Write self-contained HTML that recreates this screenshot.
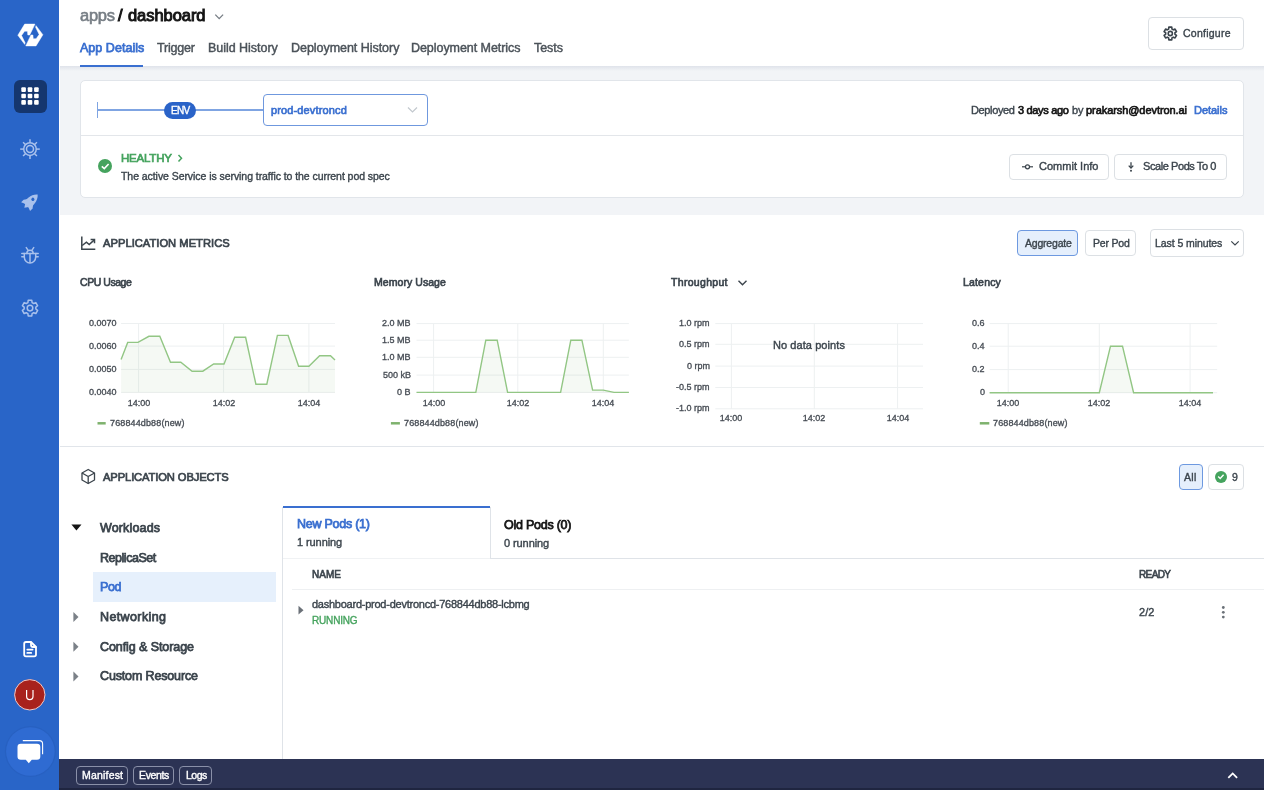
<!DOCTYPE html>
<html><head><meta charset="utf-8">
<style>
*{box-sizing:border-box;margin:0;padding:0}
html,body{width:1264px;height:790px;overflow:hidden;background:#fff;font-family:"Liberation Sans", sans-serif}
.t{position:absolute;white-space:nowrap;line-height:1;font-family:"Liberation Sans", sans-serif;will-change:transform}
.abs{position:absolute}
svg.full{position:absolute;left:0;top:0;width:1264px;height:790px}
.g{stroke:#edf0f1;stroke-width:1}
.a{fill:rgba(126,178,109,0.08);stroke:none}
.l{fill:none;stroke:#92c684;stroke-width:1.4;stroke-linejoin:miter}
.lg{stroke:#7eb26d;stroke-width:2.5}
.btn{position:absolute;border:1px solid #dce0e4;border-radius:4px;background:#fff}
</style></head><body>
<!-- sidebar -->
<div class="abs" style="left:0;top:0;width:59px;height:790px;background:#2965c8"></div>
<!-- header -->
<div class="abs" style="left:60px;top:0;width:1204px;height:67px;background:#fff"></div>
<div class="abs" style="left:60px;top:67px;width:1204px;height:148px;background:#f2f4f7"></div>
<div class="abs" style="left:60px;top:66px;width:1204px;height:5px;background:linear-gradient(#dfe3ea,#f2f4f7)"></div>
<div class="abs" style="left:79.7px;top:65px;width:63.3px;height:2px;background:#3a6fd0"></div>
<div class="btn" style="left:1148px;top:17px;width:96px;height:33px"></div>
<!-- env card -->
<div class="abs" style="left:80px;top:80px;width:1164px;height:118px;background:#fff;border:1px solid #e1e5ea;border-radius:5px"></div>
<div class="abs" style="left:81px;top:134.5px;width:1162px;height:1px;background:#e3e6ea"></div>
<div class="abs" style="left:97px;top:102px;width:1px;height:16px;background:#7fa4e2"></div>
<div class="abs" style="left:97px;top:109.3px;width:166px;height:1.4px;background:#7fa4e2"></div>
<div class="abs" style="left:164px;top:101.5px;width:31.5px;height:17px;border-radius:8.5px;background:#2a63c8"></div>
<div class="abs" style="left:263px;top:94px;width:165px;height:32px;border:1px solid #6f98de;border-radius:4px;background:#fff"></div>
<div class="abs" style="left:98px;top:159px;width:14px;height:14px;border-radius:50%;background:#45a35e"></div>
<div class="btn" style="left:1009px;top:154px;width:100px;height:26px"></div>
<div class="btn" style="left:1114px;top:154px;width:113px;height:26px"></div>
<!-- metrics -->
<div class="abs" style="left:60px;top:445.5px;width:1204px;height:1px;background:#e1e5ea"></div>
<div class="abs" style="left:1017px;top:230px;width:61px;height:26px;border:1px solid #6d99e0;border-radius:4px;background:#e5effc"></div>
<div class="btn" style="left:1085px;top:230px;width:51px;height:26px"></div>
<div class="btn" style="left:1150px;top:229px;width:94px;height:28px"></div>
<!-- objects -->
<div class="abs" style="left:1178.5px;top:463.5px;width:24px;height:26px;border:1px solid #6d99e0;border-radius:4px;background:#e5effc"></div>
<div class="btn" style="left:1208px;top:463.5px;width:36px;height:26px"></div>
<div class="abs" style="left:1215px;top:470.5px;width:12px;height:12px;border-radius:50%;background:#45a35e"></div>
<div class="abs" style="left:93px;top:572px;width:183px;height:30px;background:#e6f0fc"></div>
<div class="abs" style="left:282px;top:507px;width:1px;height:252px;background:#dfe3e8"></div>
<div class="abs" style="left:283px;top:506px;width:207px;height:2px;background:#3a6fd0"></div>
<div class="abs" style="left:489.5px;top:507px;width:1px;height:51px;background:#dfe3e8"></div>
<div class="abs" style="left:490px;top:558px;width:774px;height:1px;background:#dfe3e8"></div>
<div class="abs" style="left:283px;top:558px;width:207px;height:1px;background:#f0f2f4"></div>
<div class="abs" style="left:292px;top:589px;width:972px;height:1px;background:#eef0f2"></div>
<!-- bottom bar -->
<div class="abs" style="left:59px;top:759px;width:1205px;height:31px;background:#2c3354"></div>
<div class="abs" style="left:59px;top:788px;width:1205px;height:2px;background:#1f2540"></div>
<div class="abs" style="left:75.5px;top:765.5px;width:52px;height:19px;border:1px solid #8a90a8;border-radius:4px"></div>
<div class="abs" style="left:133px;top:765.5px;width:41px;height:19px;border:1px solid #8a90a8;border-radius:4px"></div>
<div class="abs" style="left:179px;top:765.5px;width:33px;height:19px;border:1px solid #8a90a8;border-radius:4px"></div>
<!-- sidebar active -->
<div class="abs" style="left:14px;top:80px;width:33px;height:33px;border-radius:6px;background:#15366e"></div>
<svg class="full" viewBox="0 0 1264 790">
<line x1="121.1" y1="323.5" x2="335.0" y2="323.5" class="g"/>
<line x1="121.1" y1="346.1" x2="335.0" y2="346.1" class="g"/>
<line x1="121.1" y1="369.4" x2="335.0" y2="369.4" class="g"/>
<line x1="121.1" y1="392.4" x2="335.0" y2="392.4" class="g"/>
<line x1="138.6" y1="323.5" x2="138.6" y2="392.4" class="g"/>
<line x1="223.6" y1="323.5" x2="223.6" y2="392.4" class="g"/>
<line x1="308.9" y1="323.5" x2="308.9" y2="392.4" class="g"/>
<polygon points="121.1,392.4 121.1,359.5 127.7,342.4 138.0,342.4 148.9,336.3 159.8,336.3 170.5,362.2 180.8,362.2 192.1,371.2 202.8,371.2 213.7,364.0 224.0,364.0 234.7,337.3 245.6,337.3 255.9,384.2 266.8,384.2 277.4,335.4 288.1,335.4 298.6,366.3 308.9,366.3 319.6,355.8 330.5,355.8 335.0,360.1 335.0,392.4" class="a"/>
<polyline points="121.1,359.5 127.7,342.4 138.0,342.4 148.9,336.3 159.8,336.3 170.5,362.2 180.8,362.2 192.1,371.2 202.8,371.2 213.7,364.0 224.0,364.0 234.7,337.3 245.6,337.3 255.9,384.2 266.8,384.2 277.4,335.4 288.1,335.4 298.6,366.3 308.9,366.3 319.6,355.8 330.5,355.8 335.0,360.1" class="l"/>
<line x1="416.5" y1="323.6" x2="628.9" y2="323.6" class="g"/>
<line x1="416.5" y1="340.2" x2="628.9" y2="340.2" class="g"/>
<line x1="416.5" y1="357.3" x2="628.9" y2="357.3" class="g"/>
<line x1="416.5" y1="375.1" x2="628.9" y2="375.1" class="g"/>
<line x1="416.5" y1="392.4" x2="628.9" y2="392.4" class="g"/>
<line x1="433.6" y1="323.6" x2="433.6" y2="392.4" class="g"/>
<line x1="517.8" y1="323.6" x2="517.8" y2="392.4" class="g"/>
<line x1="603.3" y1="323.6" x2="603.3" y2="392.4" class="g"/>
<polygon points="416.5,392.4 416.5,392.4 475.8,392.4 485.8,340.2 497.2,340.2 507.6,392.4 560.6,392.4 570.8,340.2 581.9,340.2 592.6,390.1 603.3,390.1 614.0,392.4 628.9,392.4 628.9,392.4" class="a"/>
<polyline points="416.5,392.4 475.8,392.4 485.8,340.2 497.2,340.2 507.6,392.4 560.6,392.4 570.8,340.2 581.9,340.2 592.6,390.1 603.3,390.1 614.0,392.4 628.9,392.4" class="l"/>
<line x1="715.3" y1="323.6" x2="923.0" y2="323.6" class="g"/>
<line x1="715.3" y1="344.3" x2="923.0" y2="344.3" class="g"/>
<line x1="715.3" y1="366.1" x2="923.0" y2="366.1" class="g"/>
<line x1="715.3" y1="387.5" x2="923.0" y2="387.5" class="g"/>
<line x1="715.3" y1="408.8" x2="923.0" y2="408.8" class="g"/>
<line x1="731.4" y1="323.6" x2="731.4" y2="408.8" class="g"/>
<line x1="814.3" y1="323.6" x2="814.3" y2="408.8" class="g"/>
<line x1="897.6" y1="323.6" x2="897.6" y2="408.8" class="g"/>
<line x1="989.6" y1="323.6" x2="1217.2" y2="323.6" class="g"/>
<line x1="989.6" y1="346.2" x2="1217.2" y2="346.2" class="g"/>
<line x1="989.6" y1="369.6" x2="1217.2" y2="369.6" class="g"/>
<line x1="989.6" y1="392.7" x2="1217.2" y2="392.7" class="g"/>
<line x1="1008.2" y1="323.6" x2="1008.2" y2="392.7" class="g"/>
<line x1="1099.3" y1="323.6" x2="1099.3" y2="392.7" class="g"/>
<line x1="1190.1" y1="323.6" x2="1190.1" y2="392.7" class="g"/>
<polygon points="989.6,392.7 989.6,392.7 1099.3,392.7 1110.5,346.2 1122.5,346.2 1133.6,392.7 1213.0,392.7 1213.0,392.7" class="a"/>
<polyline points="989.6,392.7 1099.3,392.7 1110.5,346.2 1122.5,346.2 1133.6,392.7 1213.0,392.7" class="l"/>
<line x1="97.5" y1="423.3" x2="105.7" y2="423.3" class="lg"/>
<line x1="390.9" y1="423.3" x2="399.9" y2="423.3" class="lg"/>
<line x1="979.8" y1="423.3" x2="989.3" y2="423.3" class="lg"/>
<polygon points="24.68,24.11 34.96,24.11 29.75,35.00 27.82,35.00 27.47,31.20 24.58,31.20 21.54,35.51 25.09,42.75 24.68,44.37 17.85,35.25" fill="#fff" stroke="#fff" stroke-width="0.5" stroke-linejoin="round"/><polygon points="36.03,45.89 25.75,45.89 30.96,35.00 32.89,35.00 33.24,38.80 36.13,38.80 39.16,34.49 35.62,27.25 36.03,25.63 42.86,34.75" fill="#fff" stroke="#fff" stroke-width="0.5" stroke-linejoin="round"/>
<rect x="21.3" y="87.3" width="4.6" height="4.6" rx="1" fill="#fff"/>
<rect x="21.3" y="93.7" width="4.6" height="4.6" rx="1" fill="#fff"/>
<rect x="21.3" y="100.1" width="4.6" height="4.6" rx="1" fill="#fff"/>
<rect x="27.7" y="87.3" width="4.6" height="4.6" rx="1" fill="#fff"/>
<rect x="27.7" y="93.7" width="4.6" height="4.6" rx="1" fill="#fff"/>
<rect x="27.7" y="100.1" width="4.6" height="4.6" rx="1" fill="#fff"/>
<rect x="34.1" y="87.3" width="4.6" height="4.6" rx="1" fill="#fff"/>
<rect x="34.1" y="93.7" width="4.6" height="4.6" rx="1" fill="#fff"/>
<rect x="34.1" y="100.1" width="4.6" height="4.6" rx="1" fill="#fff"/>
<g transform="translate(30,149.1)" stroke="#a9c1ec" stroke-width="1.5" fill="none"><circle r="3.5"/><circle r="6.3"/><line x1="0" y1="-6.5" x2="0" y2="-9.8" transform="rotate(0)"/><line x1="0" y1="-6.5" x2="0" y2="-9.8" transform="rotate(45)"/><line x1="0" y1="-6.5" x2="0" y2="-9.8" transform="rotate(90)"/><line x1="0" y1="-6.5" x2="0" y2="-9.8" transform="rotate(135)"/><line x1="0" y1="-6.5" x2="0" y2="-9.8" transform="rotate(180)"/><line x1="0" y1="-6.5" x2="0" y2="-9.8" transform="rotate(225)"/><line x1="0" y1="-6.5" x2="0" y2="-9.8" transform="rotate(270)"/><line x1="0" y1="-6.5" x2="0" y2="-9.8" transform="rotate(315)"/></g>
<g transform="translate(30.2,202) rotate(45)" fill="#a9c1ec"><path d="M0,-10.5 C5,-6.5 5,1.5 3.6,5 L-3.6,5 C-5,1.5 -5,-6.5 0,-10.5 Z"/><path d="M-3.8,-0.5 L-6.3,3 L-6.3,6.5 L-2.5,5 Z"/><path d="M3.8,-0.5 L6.3,3 L6.3,6.5 L2.5,5 Z"/><path d="M-2.5,4.5 L0,8.3 L2.5,4.5 Z"/><circle cx="0" cy="-3.8" r="1.6" fill="#2965c8"/></g>
<g stroke="#a9c1ec" stroke-width="1.5" fill="none" stroke-linecap="round"><path d="M24.3,253.5 L35.7,253.5 L35.7,257 A5.7,6 0 0 1 24.3,257 Z"/><path d="M26.8,253.5 A3.2,3.2 0 0 1 33.2,253.5"/><line x1="30" y1="253.5" x2="30" y2="262.5"/><path d="M26.3,247.6 L27.8,249.8 M33.7,247.6 L32.2,249.8 M21.8,253.5 L24.3,253.5 M35.7,253.5 L38.2,253.5 M21.8,256.8 L24.3,256.8 M35.7,256.8 L38.2,256.8"/></g>
<path d="M27.89,302.59 L28.20,300.31 L31.80,300.31 L32.11,302.59 L33.71,303.51 L35.85,302.64 L37.65,305.76 L35.83,307.18 L35.83,309.02 L37.65,310.44 L35.85,313.56 L33.71,312.69 L32.11,313.61 L31.80,315.89 L28.20,315.89 L27.89,313.61 L26.29,312.69 L24.15,313.56 L22.35,310.44 L24.17,309.02 L24.17,307.18 L22.35,305.76 L24.15,302.64 L26.29,303.51 Z" stroke="#a9c1ec" stroke-width="1.5" fill="none" stroke-linejoin="round"/><circle cx="30.0" cy="308.1" r="2.8" stroke="#a9c1ec" stroke-width="1.5" fill="none"/>
<g stroke="#fff" stroke-width="1.8" fill="none" stroke-linejoin="round" stroke-linecap="round"><path d="M31,642 L26,642 Q24.2,642 24.2,643.8 L24.2,654.5 Q24.2,656.3 26,656.3 L34.2,656.3 Q36,656.3 36,654.5 L36,647 Z"/><path d="M31,642.3 L31,645 Q31,647 33,647 L35.7,647"/><line x1="27.3" y1="649.6" x2="32.6" y2="649.6"/><line x1="27.3" y1="652.9" x2="31.2" y2="652.9"/></g>
<circle cx="29.8" cy="694.8" r="15.2" fill="#a8221d" stroke="#f3c9c6" stroke-width="1"/>
<path d="M26.6,690 L26.6,696.3 Q26.6,699.6 29.8,699.6 Q33,699.6 33,696.3 L33,690" stroke="#fff" stroke-width="1.2" fill="none"/>
<circle cx="30.4" cy="751.5" r="25.5" fill="#2558b4" opacity="0.35"/>
<circle cx="30.4" cy="751.5" r="24.3" fill="#2f6bd2"/>
<path d="M22.8,740.6 L39.3,740.6 Q42.6,740.6 42.6,743.9 L42.6,754.3" stroke="#fff" stroke-width="1.1" fill="none"/>
<path d="M17.5,747 Q17.5,743.7 20.8,743.7 L37,743.7 Q40.3,743.7 40.3,747 L40.3,756.4 Q40.3,759.7 37,759.7 L31.8,759.7 L28.8,763.2 L25.8,759.7 L20.8,759.7 Q17.5,759.7 17.5,756.4 Z" fill="#fff"/>
<path d="M215.3,14.6 L219.2,18.6 L223.1,14.6" stroke="#767d84" stroke-width="1.3" fill="none"/>
<path d="M1168.62,29.11 L1168.84,27.17 L1171.76,27.17 L1171.98,29.11 L1173.26,29.85 L1175.05,29.07 L1176.52,31.60 L1174.94,32.76 L1174.94,34.24 L1176.52,35.40 L1175.05,37.93 L1173.26,37.15 L1171.98,37.89 L1171.76,39.83 L1168.84,39.83 L1168.62,37.89 L1167.34,37.15 L1165.55,37.93 L1164.08,35.40 L1165.66,34.24 L1165.66,32.76 L1164.08,31.60 L1165.55,29.07 L1167.34,29.85 Z" stroke="#3b444c" stroke-width="1.6" fill="none" stroke-linejoin="round"/><circle cx="1170.3" cy="33.5" r="2.1" stroke="#3b444c" stroke-width="1.6" fill="none"/>
<path d="M408,107.5 L412.5,112 L417,107.5" stroke="#c2c8ce" stroke-width="1.2" fill="none"/>
<path d="M101.8,166.3 L104.3,168.6 L108.6,164" stroke="#fff" stroke-width="1.6" fill="none"/>
<path d="M178.5,155 L181.5,158.2 L178.5,161.4" stroke="#45a35e" stroke-width="1.5" fill="none"/>
<g stroke="#3b444c" stroke-width="1.2" fill="none"><line x1="1022" y1="166.8" x2="1025.5" y2="166.8"/><circle cx="1027.5" cy="166.8" r="2"/><line x1="1029.5" y1="166.8" x2="1033" y2="166.8"/></g>
<g stroke="#3b444c" stroke-width="1.3" fill="none"><line x1="1131" y1="162.3" x2="1131" y2="168"/><path d="M1128.7,165.6 L1131,168 L1133.3,165.6"/></g><circle cx="1131" cy="170.7" r="1" fill="#3b444c"/>
<g stroke="#3b444c" stroke-width="1.5" fill="none"><path d="M81.8,236.5 L81.8,249.3 L95.3,249.3"/><path d="M82.2,245.5 L86.4,242.2 L89.2,244.6 L94.3,239.9"/><path d="M90.6,239.4 L94.5,239.4 L94.5,243.2"/></g>
<path d="M1231.3,241.3 L1235,245 L1238.7,241.3" stroke="#3b444c" stroke-width="1.2" fill="none"/>
<path d="M738.5,280.8 L742.5,284.8 L746.5,280.8" stroke="#3b444c" stroke-width="1.4" fill="none"/>
<g stroke="#3b444c" stroke-width="1.3" fill="none" stroke-linejoin="round"><path d="M88.2,469.5 L94.5,473 L94.5,480 L88.2,483.5 L82,480 L82,473 Z"/><path d="M82,473 L88.2,476.5 L94.5,473 M88.2,476.5 L88.2,483.5"/></g>
<path d="M1218.2,476.6 L1220.2,478.5 L1223.6,474.8" stroke="#fff" stroke-width="1.4" fill="none"/>
<path d="M71.4,524.6 L81.5,524.6 L76.45,530.4 Z" fill="#151515"/>
<path d="M73.4,612.0 L78.5,617.0 L73.4,622.0 Z" fill="#7b8188"/>
<path d="M73.4,641.8 L78.5,646.8 L73.4,651.8 Z" fill="#7b8188"/>
<path d="M73.4,671.6 L78.5,676.6 L73.4,681.6 Z" fill="#7b8188"/>
<path d="M298.5,605.8 L303.5,610.2 L298.5,614.6 Z" fill="#6b7178"/>
<circle cx="1223.3" cy="607.5" r="1.4" fill="#6b7178"/>
<circle cx="1223.3" cy="612.3" r="1.4" fill="#6b7178"/>
<circle cx="1223.3" cy="617.1" r="1.4" fill="#6b7178"/>
<path d="M1228.3,777.8 L1232.7,773.4 L1237.1,777.8" stroke="#fff" stroke-width="1.8" fill="none"/>
</svg>
<span id="t0" class="t" style="top:7.42px;font-size:16.50px;color:#767d84;-webkit-text-stroke:0.58px #767d84;letter-spacing:-0.254px;left:79.70px;">apps</span>
<span id="t1" class="t" style="top:7.42px;font-size:16.50px;color:#151515;-webkit-text-stroke:0.99px #151515;left:117.70px;">/</span>
<span id="t2" class="t" style="top:7.42px;font-size:16.50px;color:#151515;-webkit-text-stroke:0.99px #151515;letter-spacing:-0.058px;left:128.40px;">dashboard</span>
<span id="t3" class="t" style="top:41.61px;font-size:12.50px;color:#3a6fd0;-webkit-text-stroke:0.75px #3a6fd0;letter-spacing:0.036px;left:79.70px;">App Details</span>
<span id="t4" class="t" style="top:41.61px;font-size:12.50px;color:#4b5259;-webkit-text-stroke:0.44px #4b5259;letter-spacing:-0.190px;left:156.90px;">Trigger</span>
<span id="t5" class="t" style="top:41.61px;font-size:12.50px;color:#4b5259;-webkit-text-stroke:0.44px #4b5259;letter-spacing:-0.031px;left:208.20px;">Build History</span>
<span id="t6" class="t" style="top:41.61px;font-size:12.50px;color:#4b5259;-webkit-text-stroke:0.44px #4b5259;letter-spacing:-0.040px;left:290.60px;">Deployment History</span>
<span id="t7" class="t" style="top:41.61px;font-size:12.50px;color:#4b5259;-webkit-text-stroke:0.44px #4b5259;letter-spacing:-0.056px;left:411.40px;">Deployment Metrics</span>
<span id="t8" class="t" style="top:41.61px;font-size:12.50px;color:#4b5259;-webkit-text-stroke:0.44px #4b5259;letter-spacing:-0.072px;left:533.50px;">Tests</span>
<span id="t9" class="t" style="top:27.91px;font-size:10.50px;color:#3b444c;-webkit-text-stroke:0.37px #3b444c;letter-spacing:0.251px;left:1183.00px;">Configure</span>
<span id="t10" class="t" style="top:105.53px;font-size:10.00px;color:#ffffff;-webkit-text-stroke:0.35px #ffffff;letter-spacing:-0.731px;left:170.90px;">ENV</span>
<span id="t11" class="t" style="top:104.68px;font-size:11.00px;color:#3a6fd0;-webkit-text-stroke:0.66px #3a6fd0;letter-spacing:0.137px;left:271.40px;">prod-devtroncd</span>
<span id="t12" class="t" style="top:104.68px;font-size:11.00px;color:#3b444c;-webkit-text-stroke:0.39px #3b444c;letter-spacing:-0.358px;left:970.80px;">Deployed</span>
<span id="t13" class="t" style="top:104.68px;font-size:11.00px;color:#151515;-webkit-text-stroke:0.66px #151515;letter-spacing:-0.328px;left:1017.80px;">3 days ago</span>
<span id="t14" class="t" style="top:104.68px;font-size:11.00px;color:#3b444c;-webkit-text-stroke:0.39px #3b444c;letter-spacing:-0.145px;left:1071.70px;">by</span>
<span id="t15" class="t" style="top:104.68px;font-size:11.00px;color:#151515;-webkit-text-stroke:0.66px #151515;letter-spacing:-0.067px;left:1086.20px;">prakarsh@devtron.ai</span>
<span id="t16" class="t" style="top:104.68px;font-size:11.00px;color:#3a6fd0;-webkit-text-stroke:0.66px #3a6fd0;letter-spacing:-0.041px;left:1193.50px;">Details</span>
<span id="t17" class="t" style="top:152.66px;font-size:11.50px;color:#45a35e;-webkit-text-stroke:0.69px #45a35e;letter-spacing:-0.214px;left:120.80px;">HEALTHY</span>
<span id="t18" class="t" style="top:171.11px;font-size:10.50px;color:#3b444c;-webkit-text-stroke:0.37px #3b444c;letter-spacing:-0.059px;left:120.50px;">The active Service is serving traffic to the current pod spec</span>
<span id="t19" class="t" style="top:161.18px;font-size:11.00px;color:#3b444c;-webkit-text-stroke:0.39px #3b444c;letter-spacing:0.018px;left:1039.00px;">Commit Info</span>
<span id="t20" class="t" style="top:161.18px;font-size:11.00px;color:#3b444c;-webkit-text-stroke:0.39px #3b444c;letter-spacing:-0.423px;left:1142.80px;">Scale Pods To 0</span>
<span id="t21" class="t" style="top:238.31px;font-size:11.20px;color:#3b444c;-webkit-text-stroke:0.67px #3b444c;letter-spacing:0.005px;left:103.00px;">APPLICATION METRICS</span>
<span id="t22" class="t" style="top:237.61px;font-size:10.50px;color:#3b444c;-webkit-text-stroke:0.37px #3b444c;letter-spacing:-0.204px;left:1025.00px;">Aggregate</span>
<span id="t23" class="t" style="top:237.61px;font-size:10.50px;color:#3b444c;-webkit-text-stroke:0.37px #3b444c;letter-spacing:-0.186px;left:1093.00px;">Per Pod</span>
<span id="t24" class="t" style="top:237.61px;font-size:10.50px;color:#3b444c;-webkit-text-stroke:0.37px #3b444c;letter-spacing:-0.074px;left:1155.20px;">Last 5 minutes</span>
<span id="t25" class="t" style="top:277.31px;font-size:10.50px;color:#3b444c;-webkit-text-stroke:0.63px #3b444c;letter-spacing:-0.452px;left:80.00px;">CPU Usage</span>
<span id="t26" class="t" style="top:277.31px;font-size:10.50px;color:#3b444c;-webkit-text-stroke:0.63px #3b444c;letter-spacing:0.058px;left:374.20px;">Memory Usage</span>
<span id="t27" class="t" style="top:277.31px;font-size:10.50px;color:#3b444c;-webkit-text-stroke:0.63px #3b444c;letter-spacing:0.313px;left:671.40px;">Throughput</span>
<span id="t28" class="t" style="top:277.31px;font-size:10.50px;color:#3b444c;-webkit-text-stroke:0.63px #3b444c;letter-spacing:0.176px;left:962.80px;">Latency</span>
<span id="t29" class="t" style="top:471.91px;font-size:11.20px;color:#3b444c;-webkit-text-stroke:0.67px #3b444c;letter-spacing:-0.120px;left:102.70px;">APPLICATION OBJECTS</span>
<span id="t30" class="t" style="top:471.61px;font-size:10.50px;color:#3b444c;-webkit-text-stroke:0.37px #3b444c;letter-spacing:0.334px;left:1184.30px;">All</span>
<span id="t31" class="t" style="top:471.61px;font-size:10.50px;color:#3b444c;-webkit-text-stroke:0.37px #3b444c;left:1231.50px;">9</span>
<span id="t32" class="t" style="top:521.61px;font-size:12.50px;color:#3b444c;-webkit-text-stroke:0.75px #3b444c;letter-spacing:0.146px;left:99.70px;">Workloads</span>
<span id="t33" class="t" style="top:551.91px;font-size:12.50px;color:#3b444c;-webkit-text-stroke:0.75px #3b444c;letter-spacing:-0.461px;left:99.70px;">ReplicaSet</span>
<span id="t34" class="t" style="top:581.01px;font-size:12.50px;color:#3a6fd0;-webkit-text-stroke:0.75px #3a6fd0;letter-spacing:-0.375px;left:99.70px;">Pod</span>
<span id="t35" class="t" style="top:610.91px;font-size:12.50px;color:#3b444c;-webkit-text-stroke:0.75px #3b444c;letter-spacing:0.385px;left:99.70px;">Networking</span>
<span id="t36" class="t" style="top:640.81px;font-size:12.50px;color:#3b444c;-webkit-text-stroke:0.75px #3b444c;letter-spacing:-0.080px;left:99.70px;">Config &amp; Storage</span>
<span id="t37" class="t" style="top:670.41px;font-size:12.50px;color:#3b444c;-webkit-text-stroke:0.75px #3b444c;letter-spacing:-0.146px;left:99.70px;">Custom Resource</span>
<span id="t38" class="t" style="top:518.41px;font-size:12.50px;color:#3a6fd0;-webkit-text-stroke:0.75px #3a6fd0;letter-spacing:-0.249px;left:296.60px;">New Pods (1)</span>
<span id="t39" class="t" style="top:537.48px;font-size:11.00px;color:#3b444c;-webkit-text-stroke:0.39px #3b444c;letter-spacing:-0.087px;left:296.60px;">1 running</span>
<span id="t40" class="t" style="top:519.01px;font-size:12.50px;color:#151515;-webkit-text-stroke:0.75px #151515;letter-spacing:-0.243px;left:504.30px;">Old Pods (0)</span>
<span id="t41" class="t" style="top:538.18px;font-size:11.00px;color:#3b444c;-webkit-text-stroke:0.39px #3b444c;letter-spacing:-0.087px;left:504.30px;">0 running</span>
<span id="t42" class="t" style="top:569.63px;font-size:10.00px;color:#3b444c;-webkit-text-stroke:0.60px #3b444c;letter-spacing:0.031px;left:312.40px;">NAME</span>
<span id="t43" class="t" style="top:569.93px;font-size:10.00px;color:#3b444c;-webkit-text-stroke:0.60px #3b444c;letter-spacing:-0.613px;left:1139.20px;">READY</span>
<span id="t44" class="t" style="top:599.18px;font-size:11.00px;color:#3b444c;-webkit-text-stroke:0.39px #3b444c;letter-spacing:-0.245px;left:312.40px;">dashboard-prod-devtroncd-768844db88-lcbmg</span>
<span id="t45" class="t" style="top:615.83px;font-size:10.00px;color:#45a35e;-webkit-text-stroke:0.35px #45a35e;letter-spacing:-0.179px;left:312.40px;">RUNNING</span>
<span id="t46" class="t" style="top:607.48px;font-size:11.00px;color:#3b444c;-webkit-text-stroke:0.39px #3b444c;letter-spacing:0.042px;left:1139.20px;">2/2</span>
<span id="t47" class="t" style="top:769.51px;font-size:10.50px;color:#ffffff;-webkit-text-stroke:0.37px #ffffff;letter-spacing:0.193px;left:81.60px;">Manifest</span>
<span id="t48" class="t" style="top:769.51px;font-size:10.50px;color:#ffffff;-webkit-text-stroke:0.37px #ffffff;letter-spacing:-0.354px;left:138.60px;">Events</span>
<span id="t49" class="t" style="top:769.51px;font-size:10.50px;color:#ffffff;-webkit-text-stroke:0.37px #ffffff;letter-spacing:-0.480px;left:185.70px;">Logs</span>
<span id="t50" class="t" style="top:318.98px;font-size:9.00px;color:#464c54;-webkit-text-stroke:0.32px #464c54;right:1147.40px;">0.0070</span>
<span id="t51" class="t" style="top:341.58px;font-size:9.00px;color:#464c54;-webkit-text-stroke:0.32px #464c54;right:1147.40px;">0.0060</span>
<span id="t52" class="t" style="top:364.88px;font-size:9.00px;color:#464c54;-webkit-text-stroke:0.32px #464c54;right:1147.40px;">0.0050</span>
<span id="t53" class="t" style="top:387.88px;font-size:9.00px;color:#464c54;-webkit-text-stroke:0.32px #464c54;right:1147.40px;">0.0040</span>
<span id="t54" class="t" style="top:398.78px;font-size:9.00px;color:#464c54;-webkit-text-stroke:0.32px #464c54;left:138.60px;transform:translateX(-50%);">14:00</span>
<span id="t55" class="t" style="top:398.78px;font-size:9.00px;color:#464c54;-webkit-text-stroke:0.32px #464c54;left:223.60px;transform:translateX(-50%);">14:02</span>
<span id="t56" class="t" style="top:398.78px;font-size:9.00px;color:#464c54;-webkit-text-stroke:0.32px #464c54;left:308.90px;transform:translateX(-50%);">14:04</span>
<span id="t57" class="t" style="top:418.88px;font-size:9.00px;color:#464c54;-webkit-text-stroke:0.32px #464c54;letter-spacing:0.133px;left:109.80px;">768844db88(new)</span>
<span id="t58" class="t" style="top:319.08px;font-size:9.00px;color:#464c54;-webkit-text-stroke:0.32px #464c54;right:853.00px;">2.0 MB</span>
<span id="t59" class="t" style="top:335.68px;font-size:9.00px;color:#464c54;-webkit-text-stroke:0.32px #464c54;right:853.00px;">1.5 MB</span>
<span id="t60" class="t" style="top:352.78px;font-size:9.00px;color:#464c54;-webkit-text-stroke:0.32px #464c54;right:853.00px;">1.0 MB</span>
<span id="t61" class="t" style="top:370.58px;font-size:9.00px;color:#464c54;-webkit-text-stroke:0.32px #464c54;right:853.00px;">500 kB</span>
<span id="t62" class="t" style="top:387.88px;font-size:9.00px;color:#464c54;-webkit-text-stroke:0.32px #464c54;right:853.00px;">0 B</span>
<span id="t63" class="t" style="top:398.78px;font-size:9.00px;color:#464c54;-webkit-text-stroke:0.32px #464c54;left:433.60px;transform:translateX(-50%);">14:00</span>
<span id="t64" class="t" style="top:398.78px;font-size:9.00px;color:#464c54;-webkit-text-stroke:0.32px #464c54;left:517.80px;transform:translateX(-50%);">14:02</span>
<span id="t65" class="t" style="top:398.78px;font-size:9.00px;color:#464c54;-webkit-text-stroke:0.32px #464c54;left:603.30px;transform:translateX(-50%);">14:04</span>
<span id="t66" class="t" style="top:418.88px;font-size:9.00px;color:#464c54;-webkit-text-stroke:0.32px #464c54;letter-spacing:0.133px;left:403.90px;">768844db88(new)</span>
<span id="t67" class="t" style="top:319.08px;font-size:9.00px;color:#464c54;-webkit-text-stroke:0.32px #464c54;right:554.00px;">1.0 rpm</span>
<span id="t68" class="t" style="top:339.78px;font-size:9.00px;color:#464c54;-webkit-text-stroke:0.32px #464c54;right:554.00px;">0.5 rpm</span>
<span id="t69" class="t" style="top:361.58px;font-size:9.00px;color:#464c54;-webkit-text-stroke:0.32px #464c54;right:554.00px;">0 rpm</span>
<span id="t70" class="t" style="top:382.98px;font-size:9.00px;color:#464c54;-webkit-text-stroke:0.32px #464c54;right:554.00px;">-0.5 rpm</span>
<span id="t71" class="t" style="top:404.28px;font-size:9.00px;color:#464c54;-webkit-text-stroke:0.32px #464c54;right:554.00px;">-1.0 rpm</span>
<span id="t72" class="t" style="top:414.38px;font-size:9.00px;color:#464c54;-webkit-text-stroke:0.32px #464c54;left:731.40px;transform:translateX(-50%);">14:00</span>
<span id="t73" class="t" style="top:414.38px;font-size:9.00px;color:#464c54;-webkit-text-stroke:0.32px #464c54;left:814.30px;transform:translateX(-50%);">14:02</span>
<span id="t74" class="t" style="top:414.38px;font-size:9.00px;color:#464c54;-webkit-text-stroke:0.32px #464c54;left:897.60px;transform:translateX(-50%);">14:04</span>
<span id="t75" class="t" style="top:319.08px;font-size:9.00px;color:#464c54;-webkit-text-stroke:0.32px #464c54;right:279.40px;">0.6</span>
<span id="t76" class="t" style="top:341.68px;font-size:9.00px;color:#464c54;-webkit-text-stroke:0.32px #464c54;right:279.40px;">0.4</span>
<span id="t77" class="t" style="top:365.08px;font-size:9.00px;color:#464c54;-webkit-text-stroke:0.32px #464c54;right:279.40px;">0.2</span>
<span id="t78" class="t" style="top:388.18px;font-size:9.00px;color:#464c54;-webkit-text-stroke:0.32px #464c54;right:279.40px;">0</span>
<span id="t79" class="t" style="top:398.78px;font-size:9.00px;color:#464c54;-webkit-text-stroke:0.32px #464c54;left:1008.20px;transform:translateX(-50%);">14:00</span>
<span id="t80" class="t" style="top:398.78px;font-size:9.00px;color:#464c54;-webkit-text-stroke:0.32px #464c54;left:1099.30px;transform:translateX(-50%);">14:02</span>
<span id="t81" class="t" style="top:398.78px;font-size:9.00px;color:#464c54;-webkit-text-stroke:0.32px #464c54;left:1190.10px;transform:translateX(-50%);">14:04</span>
<span id="t82" class="t" style="top:418.88px;font-size:9.00px;color:#464c54;-webkit-text-stroke:0.32px #464c54;letter-spacing:0.133px;left:993.00px;">768844db88(new)</span>
<span id="t83" class="t" style="top:340.38px;font-size:11.00px;color:#3b444c;-webkit-text-stroke:0.39px #3b444c;letter-spacing:0.072px;left:808.60px;transform:translateX(-50%);">No data points</span>
</body></html>
